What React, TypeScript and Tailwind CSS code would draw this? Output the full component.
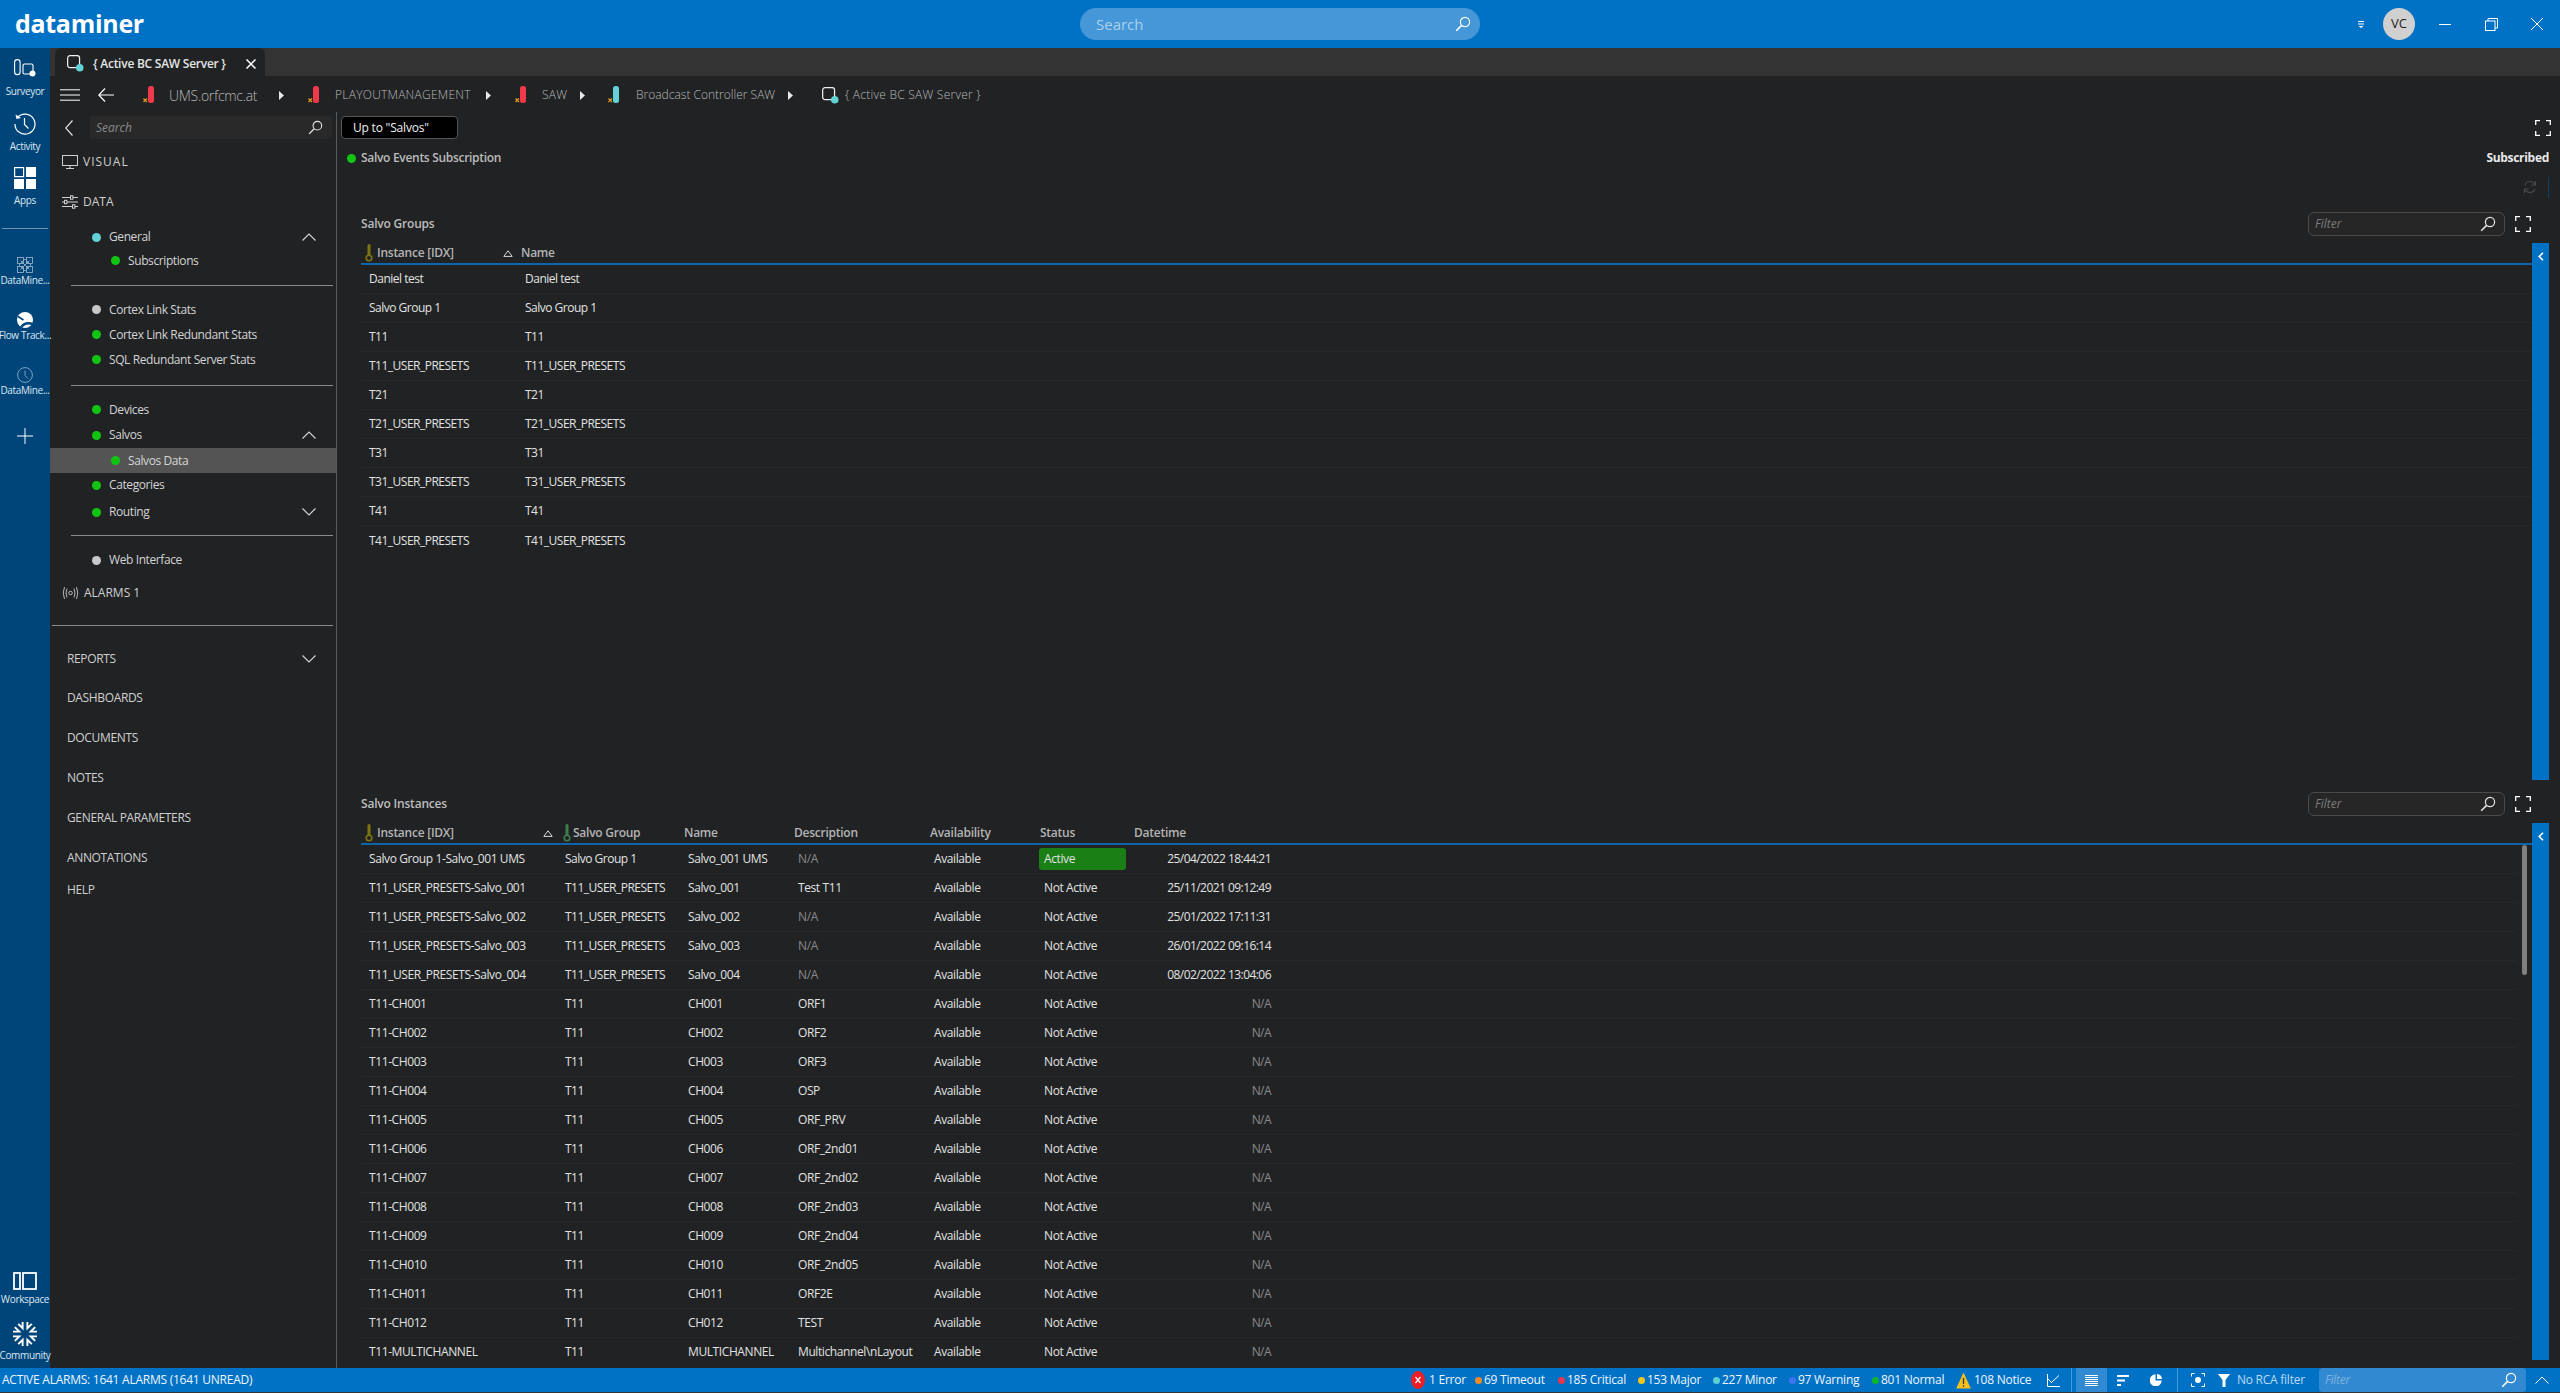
import type { ReactNode } from "react";

const SearchGlass = ({ className = "" }: { className?: string }) => (
  <svg viewBox="0 0 16 16" className={className} fill="none" stroke="currentColor" strokeWidth="1.2">
    <circle cx="10" cy="6" r="4.6" />
    <path d="M6.6 9.4 1.2 14.8" strokeWidth="1.5" />
  </svg>
);

const Chevron = ({ up }: { up?: boolean }) => (
  <svg viewBox="0 0 14 8" className="w-[14px] h-[8px] text-[#d0d0d0]" fill="none" stroke="currentColor" strokeWidth="1.2">
    <path d={up ? "M0.5 7.5 7 1l6.5 6.5" : "M0.5 0.5 7 7l6.5-6.5"} />
  </svg>
);

const Fullscreen = () => (
  <svg viewBox="0 0 16 16" className="w-[16px] h-[16px] text-white" fill="none" stroke="currentColor" strokeWidth="1.3">
    <path d="M0.7 5V0.7H5M11 0.7h4.3V5M15.3 11v4.3H11M5 15.3H0.7V11" />
  </svg>
);

const Dot = ({ c }: { c: string }) => <span className={`block w-[9px] h-[9px] rounded-full shrink-0 ${c}`} />;

const GREEN = "bg-[#12c412]";
const GRAY = "bg-[#c8c8c8]";
const TEAL = "bg-[#62d2d6]";

const Thermo = ({ color }: { color: string }) => (
  <svg viewBox="0 0 8 18" className="w-[8px] h-[18px] shrink-0" fill="none">
    <rect x="2.5" y="0" width="3" height="12" rx="1.5" fill={color} />
    <circle cx="4" cy="14" r="2.8" stroke={color} strokeWidth="1.6" />
  </svg>
);

const SortUp = () => (
  <svg viewBox="0 0 10 7" className="w-[10px] h-[7px] shrink-0 text-[#d8d8d8]" fill="none" stroke="currentColor" strokeWidth="1">
    <path d="M5 0.8 9.2 6.4H0.8Z" />
  </svg>
);

const ElementIcon = ({ color }: { color: string }) => (
  <svg viewBox="0 0 12 18" className="w-[12px] h-[18px] shrink-0" fill="none">
    <rect x="5" y="0" width="6" height="17" rx="2.5" fill={color} />
    <path d="M0.5 12.5 4 16M4 12.5 0.5 16" stroke="#e2971c" strokeWidth="1.3" />
  </svg>
);

const ActiveIcon = ({ className = "" }: { className?: string }) => (
  <svg viewBox="0 0 18 18" className={className} fill="none">
    <rect x="0.7" y="0.7" width="12.6" height="12.6" rx="2.5" stroke="#f0f0f0" strokeWidth="1.3" />
    <circle cx="13.5" cy="13.5" r="4" fill="#62d2d6" />
  </svg>
);

const CrumbArrow = ({ w }: { w: string }) => (
  <span className={`block shrink-0 ${w}`}>
    <svg viewBox="0 0 5 9" className="w-[5px] h-[9px]">
      <path d="M0 0 5 4.5 0 9Z" fill="#e8e8e8" />
    </svg>
  </span>
);

const TopBar = () => (
  <header className="h-[48px] shrink-0 bg-[#0072c6] flex items-center relative">
    <div className="pl-[15px] w-[1080px] text-white font-bold text-[25px] tracking-[-0.3px] leading-none pb-[2px]">dataminer</div>
    <div className="w-[400px] h-[32px] rounded-full bg-[#4597d8] flex items-center pl-[16px] pr-[9px]">
      <span className="text-[15px] text-[#acd0ec]">Search</span>
      <SearchGlass className="ml-auto w-[16px] h-[16px] text-white" />
    </div>
    <div className="ml-auto flex items-center">
      <svg viewBox="0 0 6 7" className="w-[6px] h-[7px] text-white mr-[19px]">
        <path d="M0 0h6v1H0zM0 2.5h6v1H0zM0.5 5h5L3 7Z" fill="currentColor" />
      </svg>
      <div className="w-[32px] h-[32px] rounded-full bg-[#d0d0d0] text-[#222] text-[13px] flex items-center justify-center">VC</div>
      <div className="w-[12px] h-px bg-white ml-[24px]" />
      <svg viewBox="0 0 13 13" className="w-[13px] h-[13px] text-white ml-[34px]" fill="none" stroke="currentColor">
        <rect x="0.5" y="3" width="9.5" height="9.5" />
        <path d="M3 3V0.5h9.5V10H10" />
      </svg>
      <svg viewBox="0 0 12 12" className="w-[12px] h-[12px] text-white ml-[33px] mr-[17px]" fill="none" stroke="currentColor">
        <path d="M0 0l12 12M12 0 0 12" />
      </svg>
    </div>
  </header>
);

const RailLabel = ({ children }: { children: ReactNode }) => (
  <div className="text-[10px] leading-[15px] tracking-[-0.35px] text-[#dbe6ef] whitespace-nowrap">{children}</div>
);

const Rail = () => (
  <aside className="w-[50px] shrink-0 bg-[#00457a] flex flex-col items-center pt-[8px] pb-[5px]">
    <div className="h-[24px] flex items-center">
      <svg viewBox="0 0 22 18" className="w-[22px] h-[18px] text-white" fill="none" stroke="currentColor" strokeWidth="1.1">
        <rect x="0.6" y="0.6" width="5.5" height="15" rx="2.7" />
        <rect x="9" y="5" width="10" height="10" rx="1.5" />
        <circle cx="18.5" cy="14.5" r="3" fill="currentColor" stroke="none" />
      </svg>
    </div>
    <div className="mt-[4px]"><RailLabel>Surveyor</RailLabel></div>

    <div className="h-[24px] mt-[13px] flex items-center">
      <svg viewBox="0 0 22 22" className="w-[22px] h-[22px] text-white" fill="none" stroke="currentColor" strokeWidth="1.2">
        <path d="M3.5 4.5A10 10 0 1 1 1 11" />
        <path d="M1.5 1.5 2.5 6 7 5Z" fill="currentColor" stroke="none" />
        <path d="M10.5 5v6.5l4 4" />
      </svg>
    </div>
    <div className="mt-[3px]"><RailLabel>Activity</RailLabel></div>

    <div className="h-[24px] mt-[12px] flex items-center">
      <svg viewBox="0 0 22 22" className="w-[22px] h-[22px] text-white" fill="currentColor">
        <path d="M0.6 0.6H9.6V9.6H0.6Z" fill="none" stroke="currentColor" strokeWidth="1.2" />
        <rect x="12" y="0" width="10" height="10" />
        <rect x="0" y="12" width="10" height="10" />
        <rect x="12" y="12" width="10" height="10" />
      </svg>
    </div>
    <div className="mt-[3px]"><RailLabel>Apps</RailLabel></div>

    <div className="w-[46px] h-px bg-[#6f94b2] mt-[20px] shrink-0" />

    <div className="h-[16px] mt-[28px] flex items-center">
      <svg viewBox="0 0 16 16" className="w-[16px] h-[16px] text-[#9fb8cc]" fill="none" stroke="currentColor" strokeWidth="0.8">
        <rect x="0.5" y="0.5" width="6" height="6" />
        <rect x="9.5" y="0.5" width="6" height="6" />
        <rect x="0.5" y="9.5" width="6" height="6" />
        <rect x="9.5" y="9.5" width="6" height="6" />
        <path d="M3.5 3.5 12.5 12.5M12.5 3.5 3.5 12.5M8 2 14 8 8 14 2 8Z" />
      </svg>
    </div>
    <RailLabel>DataMine...</RailLabel>

    <div className="h-[16px] mt-[24px] flex items-center">
      <svg viewBox="0 0 16 16" className="w-[16px] h-[16px]">
        <circle cx="8" cy="8" r="8" fill="#fff" />
        <path d="M1 4.5 6.5 8" stroke="#00457a" strokeWidth="1.6" fill="none" />
        <path d="M4 15.5Q7.5 9.5 16 12" stroke="#00457a" strokeWidth="2.4" fill="none" />
      </svg>
    </div>
    <RailLabel>Flow Track...</RailLabel>

    <div className="h-[16px] mt-[24px] flex items-center">
      <svg viewBox="0 0 16 16" className="w-[16px] h-[16px] text-[#8fadc4]" fill="none" stroke="currentColor" strokeWidth="0.9">
        <circle cx="8" cy="8" r="7.4" />
        <path d="M8 3.5V8.5L11 11.5" />
      </svg>
    </div>
    <RailLabel>DataMine...</RailLabel>

    <div className="h-[18px] mt-[29px] flex items-center">
      <svg viewBox="0 0 16 16" className="w-[16px] h-[16px] text-white" stroke="currentColor" strokeWidth="1">
        <path d="M8 0v16M0 8h16" />
      </svg>
    </div>

    <div className="mt-auto h-[20px] flex items-center">
      <svg viewBox="0 0 24 18" className="w-[24px] h-[18px] text-white" fill="none" stroke="currentColor" strokeWidth="1.8">
        <rect x="1" y="1" width="6" height="16" />
        <rect x="10" y="1" width="13" height="16" />
      </svg>
    </div>
    <div className="mt-[1px]"><RailLabel>Workspace</RailLabel></div>
    <div className="mt-[13px] h-[28px] flex items-center">
      <svg viewBox="0 0 26 26" className="w-[26px] h-[26px] text-white" fill="none" stroke="currentColor" strokeWidth="1.9">
        {[0, 45, 90, 135, 180, 225, 270, 315].map((a) => (
          <path key={a} d="M10.6 1 13 6.8 15.4 1" transform={`rotate(${a + 22.5} 13 13)`} />
        ))}
      </svg>
    </div>
    <RailLabel>Community</RailLabel>
  </aside>
);

type NavProps = { dot: string; label: string; h: string; sub?: boolean; chevron?: "up" | "down"; active?: boolean };

const NavRow = ({ dot, label, h, sub, chevron, active }: NavProps) => (
  <div className={`flex items-center gap-[8px] pr-[20px] shrink-0 ${h} ${sub ? "pl-[61px]" : "pl-[42px]"} ${active ? "bg-[#545454]" : ""}`}>
    <Dot c={dot} />
    <span className="text-[12px] text-[#d4d4d4] tracking-[-0.4px] whitespace-nowrap">{label}</span>
    {chevron && <span className="ml-auto"><Chevron up={chevron === "up"} /></span>}
  </div>
);

const NavRule = ({ className }: { className: string }) => (
  <div className={`h-[1px] bg-[#8a8a8a] mr-[3px] shrink-0 ${className}`} />
);

const SectionLink = ({ label, h, chevron }: { label: string; h: string; chevron?: boolean }) => (
  <div className={`flex items-center pl-[17px] pr-[20px] text-[12px] text-[#d0d0d0] tracking-[-0.35px] shrink-0 ${h}`}>
    {label}
    {chevron && <span className="ml-auto"><Chevron /></span>}
  </div>
);

const Sidebar = () => (
  <nav className="w-[287px] shrink-0 border-r border-[#5a5a5a] flex flex-col pt-[4px]">
    <div className="h-[23px] flex items-center shrink-0">
      <svg viewBox="0 0 8 16" className="w-[8px] h-[16px] ml-[15px] text-[#e0e0e0]" fill="none" stroke="currentColor" strokeWidth="1.2">
        <path d="M7.5 0.5 0.7 8l6.8 7.5" />
      </svg>
      <div className="ml-[17px] w-[242px] h-[23px] rounded-[3px] bg-[#292929] flex items-center pl-[6px] pr-[9px]">
        <span className="italic text-[12px] text-[#8a8a8a]">Search</span>
        <SearchGlass className="ml-auto w-[15px] h-[15px] text-[#e4e4e4]" />
      </div>
    </div>

    <div className="h-[28px] mt-[9px] flex items-center pl-[12px] gap-[5px] shrink-0 text-[12px] text-[#d0d0d0]">
      <svg viewBox="0 0 16 14" className="w-[16px] h-[14px]" fill="none" stroke="currentColor" strokeWidth="1">
        <rect x="0.5" y="0.5" width="15" height="10" />
        <path d="M8 10.5v3M4 13.5h8" />
      </svg>
      <span className="tracking-[1px]">VISUAL</span>
    </div>
    <div className="h-[28px] mt-[12px] flex items-center pl-[12px] gap-[5px] shrink-0 text-[12px] text-[#d0d0d0]">
      <svg viewBox="0 0 16 14" className="w-[16px] h-[14px]" fill="none" stroke="currentColor" strokeWidth="1">
        <path d="M0 2.5h16M0 7h16M0 11.5h16" />
        <rect x="8.5" y="0.8" width="2.4" height="3.4" fill="#202224" />
        <rect x="2.5" y="5.3" width="2.4" height="3.4" fill="#202224" />
        <rect x="10.5" y="9.8" width="2.4" height="3.4" fill="#202224" />
      </svg>
      DATA
    </div>

    <div className="mt-[9px]" />
    <NavRow dot={TEAL} label="General" h="h-[24px]" chevron="up" />
    <NavRow dot={GREEN} label="Subscriptions" h="h-[23px]" sub />
    <NavRule className="ml-[21px] mt-[13px]" />
    <div className="mt-[11px]" />
    <NavRow dot={GRAY} label="Cortex Link Stats" h="h-[25px]" />
    <NavRow dot={GREEN} label="Cortex Link Redundant Stats" h="h-[25px]" />
    <NavRow dot={GREEN} label="SQL Redundant Server Stats" h="h-[25px]" />
    <NavRule className="ml-[21px] mt-[13px]" />
    <div className="mt-[11px]" />
    <NavRow dot={GREEN} label="Devices" h="h-[25px]" />
    <NavRow dot={GREEN} label="Salvos" h="h-[26px]" chevron="up" />
    <NavRow dot={GREEN} label="Salvos Data" h="h-[25px]" sub active />
    <NavRow dot={GREEN} label="Categories" h="h-[24px]" />
    <NavRow dot={GREEN} label="Routing" h="h-[30px]" chevron="down" />
    <NavRule className="ml-[21px] mt-[8px]" />
    <div className="mt-[12px]" />
    <NavRow dot={GRAY} label="Web Interface" h="h-[24px]" />

    <div className="h-[24px] mt-[9px] flex items-center pl-[12px] gap-[5px] shrink-0 text-[12px] text-[#d0d0d0]">
      <svg viewBox="0 0 17 12" className="w-[17px] h-[12px] text-[#c8c8c8]" fill="none" stroke="currentColor" strokeWidth="0.9">
        <circle cx="8.5" cy="6" r="1.8" />
        <path d="M5 1.5Q3 6 5 10.5M12 1.5q2 4.5 0 9M2.5 0Q0 6 2.5 12M14.5 0q2.5 6 0 12" />
      </svg>
      ALARMS 1
    </div>
    <NavRule className="ml-[2px] mt-[20px]" />

    <div className="mt-[13px]" />
    <SectionLink label="REPORTS" h="h-[39px]" chevron />
    <SectionLink label="DASHBOARDS" h="h-[40px]" />
    <SectionLink label="DOCUMENTS" h="h-[40px]" />
    <SectionLink label="NOTES" h="h-[40px]" />
    <SectionLink label="GENERAL PARAMETERS" h="h-[40px]" />
    <SectionLink label="ANNOTATIONS" h="h-[40px]" />
    <SectionLink label="HELP" h="h-[24px]" />
  </nav>
);

const Filter = () => (
  <div className="w-[197px] h-[24px] rounded-[6px] border border-[#4a4a4a] bg-[#262626] flex items-center pl-[6px] pr-[8px] ml-auto shrink-0">
    <span className="italic text-[12px] text-[#7c7c7c]">Filter</span>
    <SearchGlass className="ml-auto w-[16px] h-[16px] text-[#e4e4e4]" />
  </div>
);

const BlueStrip = () => (
  <div className="w-[17px] shrink-0 bg-[#0072c6] flex justify-center pt-[9px]">
    <svg viewBox="0 0 6 9" className="w-[6px] h-[9px] text-white" fill="none" stroke="currentColor" strokeWidth="1.6">
      <path d="M5 0.8 1.2 4.5 5 8.2" />
    </svg>
  </div>
);

const Section = ({ title, className, children }: { title: string; className: string; children: ReactNode }) => (
  <section className={`flex flex-col pl-[24px] pr-[11px] min-h-0 ${className}`}>
    <div className="h-[24px] flex items-center shrink-0">
      <span className="text-[12px] font-semibold text-[#bcbcbc] tracking-[-0.2px]">{title}</span>
      <Filter />
      <span className="ml-[10px] mr-[18px] block"><Fullscreen /></span>
    </div>
    <div className="mt-[7px] flex flex-1 min-h-0">
      <div className="relative flex-1 overflow-hidden">{children}</div>
      <BlueStrip />
    </div>
  </section>
);

const HEAD = "h-[22px] border-b-2 border-[#0f63a8] text-[12px] font-semibold text-[#b4b4b4] tracking-[-0.25px] items-center flex";

const groups = [
  "Daniel test",
  "Salvo Group 1",
  "T11",
  "T11_USER_PRESETS",
  "T21",
  "T21_USER_PRESETS",
  "T31",
  "T31_USER_PRESETS",
  "T41",
  "T41_USER_PRESETS",
];

const GroupsTable = () => (
  <div>
    <div className={HEAD}>
      <span className="ml-[4px]"><Thermo color="#7d7412" /></span>
      <span className="ml-[4px] w-[126px]">Instance [IDX]</span>
      <SortUp />
      <span className="ml-[8px]">Name</span>
    </div>
    {groups.map((g, i) => (
      <div key={g} className={`h-[29px] flex items-center pl-[8px] text-[12px] text-[#e2e2e2] tracking-[-0.5px] ${i < groups.length - 1 ? "border-b border-[#26282a]" : ""}`}>
        <span className="w-[156px]">{g}</span>
        <span>{g}</span>
      </div>
    ))}
  </div>
);

type Salvo = { id: string; group: string; name: string; desc: string; status: string; date: string };

const presets = (n: string, desc: string, date: string): Salvo => ({
  id: `T11_USER_PRESETS-Salvo_${n}`,
  group: "T11_USER_PRESETS",
  name: `Salvo_${n}`,
  desc,
  status: "Not Active",
  date,
});

const channel = (name: string, desc: string): Salvo => ({
  id: `T11-${name}`,
  group: "T11",
  name,
  desc,
  status: "Not Active",
  date: "N/A",
});

const salvos: Salvo[] = [
  { id: "Salvo Group 1-Salvo_001 UMS", group: "Salvo Group 1", name: "Salvo_001 UMS", desc: "N/A", status: "Active", date: "25/04/2022 18:44:21" },
  presets("001", "Test T11", "25/11/2021 09:12:49"),
  presets("002", "N/A", "25/01/2022 17:11:31"),
  presets("003", "N/A", "26/01/2022 09:16:14"),
  presets("004", "N/A", "08/02/2022 13:04:06"),
  channel("CH001", "ORF1"),
  channel("CH002", "ORF2"),
  channel("CH003", "ORF3"),
  channel("CH004", "OSP"),
  channel("CH005", "ORF_PRV"),
  channel("CH006", "ORF_2nd01"),
  channel("CH007", "ORF_2nd02"),
  channel("CH008", "ORF_2nd03"),
  channel("CH009", "ORF_2nd04"),
  channel("CH010", "ORF_2nd05"),
  channel("CH011", "ORF2E"),
  channel("CH012", "TEST"),
  channel("MULTICHANNEL", "Multichannel\\nLayout"),
];

const InstancesTable = () => (
  <div>
    <div className={HEAD}>
      <span className="ml-[4px]"><Thermo color="#7d7412" /></span>
      <span className="ml-[4px] w-[166px]">Instance [IDX]</span>
      <SortUp />
      <span className="ml-[10px]"><Thermo color="#3f7f4a" /></span>
      <span className="ml-[2px] w-[111px]">Salvo Group</span>
      <span className="w-[110px]">Name</span>
      <span className="w-[136px]">Description</span>
      <span className="w-[110px]">Availability</span>
      <span className="w-[94px]">Status</span>
      <span>Datetime</span>
    </div>
    {salvos.map((s) => (
      <div key={s.id} className="h-[29px] mr-[16px] flex items-center pl-[8px] text-[12px] text-[#e2e2e2] tracking-[-0.4px] border-b border-[#26282a] whitespace-nowrap">
        <span className="w-[196px]">{s.id}</span>
        <span className="w-[123px] tracking-[-0.5px]">{s.group}</span>
        <span className="w-[110px]">{s.name}</span>
        <span className={`w-[136px] ${s.desc === "N/A" ? "text-[#8a8a8a]" : ""}`}>{s.desc}</span>
        <span className="w-[105px]">Available</span>
        {s.status === "Active" ? (
          <span className="w-[87px] h-[22px] rounded-[3px] bg-[#1a8015] pl-[5px] flex items-center">Active</span>
        ) : (
          <span className="w-[87px] pl-[5px]">{s.status}</span>
        )}
        <span className={`w-[145px] text-right tracking-[-0.55px] ${s.date === "N/A" ? "text-[#8a8a8a]" : ""}`}>{s.date}</span>
      </div>
    ))}
    <div className="absolute top-[22px] right-[5px] w-[5px] h-[130px] rounded-full bg-[#808080]" />
  </div>
);

const Main = () => (
  <main className="flex-1 min-w-0 flex flex-col pt-[4px] pb-[8px]">
    <div className="flex items-center h-[23px] shrink-0 pl-[4px] pr-[9px]">
      <div className="w-[117px] h-[23px] bg-black border border-[#555] rounded-[4px] pl-[11px] flex items-center text-[12px] text-[#f0f0f0] tracking-[-0.2px]">
        Up to "Salvos"
      </div>
      <span className="ml-auto block"><Fullscreen /></span>
    </div>
    <div className="h-[20px] mt-[9px] shrink-0 flex items-center pl-[10px] pr-[11px] gap-[5px]">
      <Dot c={GREEN} />
      <span className="text-[12px] font-semibold text-[#bcbcbc] tracking-[-0.3px]">Salvo Events Subscription</span>
      <span className="ml-auto text-[12px] font-bold text-[#e8e8e8] tracking-[-0.3px]">Subscribed</span>
    </div>
    <div className="h-[22px] mt-[8px] shrink-0 flex items-center justify-end pr-[11px]">
      <svg viewBox="0 0 14 14" className="w-[14px] h-[14px] text-[#4a4a4a]" fill="none" stroke="currentColor" strokeWidth="1.1">
        <path d="M2 5A5.5 5.5 0 0 1 12 4.5M12 9A5.5 5.5 0 0 1 2 9.5" />
        <path d="M12.5 1v4h-4M1.5 13V9h4" />
      </svg>
      <span className="block w-px h-[21px] bg-[#123f63] ml-[11px]" />
    </div>
    <Section title="Salvo Groups" className="mt-[14px] h-[568px] shrink-0">
      <GroupsTable />
    </Section>
    <Section title="Salvo Instances" className="mt-[12px] flex-1">
      <InstancesTable />
    </Section>
  </main>
);

const Breadcrumbs = () => (
  <div className="h-[36px] shrink-0 pt-[2px] flex items-center text-[#b8b8b8] font-light whitespace-nowrap">
    <svg viewBox="0 0 20 12" className="w-[20px] h-[12px] ml-[10px] text-white" stroke="currentColor" strokeWidth="1">
      <path d="M0 0.8h20M0 6h20M0 11.2h20" />
    </svg>
    <svg viewBox="0 0 16 14" className="w-[16px] h-[14px] ml-[18px] text-white" fill="none" stroke="currentColor" strokeWidth="1.2">
      <path d="M7 0.5.8 7 7 13.5M.8 7H16" />
    </svg>
    <span className="ml-[29px] w-[26px] shrink-0"><ElementIcon color="#f0394a" /></span>
    <span className="w-[110px] text-[14px] tracking-[-0.3px]">UMS.orfcmc.at</span>
    <CrumbArrow w="w-[29px]" />
    <span className="w-[27px] shrink-0"><ElementIcon color="#f0394a" /></span>
    <span className="w-[151px] text-[12px] tracking-[0.25px]">PLAYOUTMANAGEMENT</span>
    <CrumbArrow w="w-[29px]" />
    <span className="w-[27px] shrink-0"><ElementIcon color="#f0394a" /></span>
    <span className="w-[38px] text-[12px] tracking-[0.25px]">SAW</span>
    <CrumbArrow w="w-[28px]" />
    <span className="w-[28px] shrink-0"><ElementIcon color="#62d2d6" /></span>
    <span className="w-[152px] text-[12px]">Broadcast Controller SAW</span>
    <CrumbArrow w="w-[34px]" />
    <span className="w-[23px] shrink-0"><ActiveIcon className="w-[17px] h-[17px]" /></span>
    <span className="text-[12px] tracking-[0.25px]">{"{ Active BC SAW Server }"}</span>
  </div>
);

const Content = () => (
  <div className="flex-1 min-w-0 flex flex-col">
    <div className="h-[28px] shrink-0 bg-[#333333] pl-[5px]">
      <div className="w-[210px] h-[28px] bg-[#202224] rounded-t-[6px] flex items-center pl-[12px] pr-[9px] pt-[3px]">
        <ActiveIcon className="w-[17px] h-[17px] shrink-0" />
        <span className="ml-[9px] text-[12px] font-semibold text-[#e4e4e4] tracking-[-0.25px] whitespace-nowrap">{"{ Active BC SAW Server }"}</span>
        <svg viewBox="0 0 10 10" className="ml-auto w-[10px] h-[10px] text-white" fill="none" stroke="currentColor" strokeWidth="1.5">
          <path d="M0.5 0.5l9 9M9.5 0.5l-9 9" />
        </svg>
      </div>
    </div>
    <Breadcrumbs />
    <div className="flex-1 min-h-0 flex">
      <Sidebar />
      <Main />
    </div>
  </div>
);

const alarms = [
  { w: "w-[83px]", dot: "bg-[#f08a24]", label: "69 Timeout" },
  { w: "w-[80px]", dot: "bg-[#e8364f]", label: "185 Critical" },
  { w: "w-[75px]", dot: "bg-[#f2c81e]", label: "153 Major" },
  { w: "w-[76px]", dot: "bg-[#5cd0d2]", label: "227 Minor" },
  { w: "w-[83px]", dot: "bg-[#3f74f0]", label: "97 Warning" },
  { w: "w-[84px]", dot: "bg-[#12b52a]", label: "801 Normal" },
];

const StatusBar = () => (
  <footer className="h-[25px] shrink-0 bg-[#0072c6] border-b border-[#333] flex items-stretch text-[12px] text-[#eef5fb] tracking-[-0.25px] whitespace-nowrap">
    <div className="pl-[2px] flex items-center w-[1411px] shrink-0">ACTIVE ALARMS: 1641 ALARMS (1641 UNREAD)</div>
    <div className="flex items-center w-[64px] shrink-0 gap-[4px]">
      <svg viewBox="0 0 14 18" className="w-[14px] h-[18px] shrink-0">
        <ellipse cx="7" cy="9" rx="7" ry="9" fill="#ee1c25" />
        <path d="M4.5 6 9.5 12M9.5 6 4.5 12" stroke="#fff" strokeWidth="1.2" />
      </svg>
      1 Error
    </div>
    {alarms.map((a) => (
      <div key={a.label} className={`flex items-center shrink-0 gap-[2px] ${a.w}`}>
        <span className={`block w-[7px] h-[7px] rounded-full shrink-0 ${a.dot}`} />
        {a.label}
      </div>
    ))}
    <div className="flex items-center w-[91px] shrink-0 gap-[3px]">
      <svg viewBox="0 0 15 17" className="w-[15px] h-[17px] shrink-0">
        <path d="M7.5 0.5 14.8 16.5H0.2Z" fill="#f6c01c" />
        <path d="M7.5 6v6M7.5 13.2v1.6" stroke="#333" strokeWidth="1.3" />
      </svg>
      108 Notice
    </div>
    <div className="w-[24px] flex items-center shrink-0">
      <svg viewBox="0 0 13 13" className="w-[13px] h-[13px] text-white" fill="none" stroke="currentColor">
        <path d="M0.5 0v12.5H13M1 5l3.5 3.5L12 1.5" />
      </svg>
    </div>
    <div className="w-px bg-[#4a9ad8] shrink-0" />
    <div className="w-[4px] shrink-0" />
    <div className="w-[31px] bg-[#3189d1] flex items-center justify-center shrink-0">
      <svg viewBox="0 0 13 11" className="w-[13px] h-[11px] text-white" stroke="currentColor" strokeWidth="1">
        <path d="M0 0.5h13M0 2.5h13M0 4.5h13M0 6.5h13M0 8.5h13M0 10.5h13" />
      </svg>
    </div>
    <div className="w-[32px] flex items-center justify-center shrink-0">
      <svg viewBox="0 0 12 11" className="w-[12px] h-[11px]" fill="#fff">
        <rect x="0" y="0" width="12" height="2" />
        <rect x="0" y="4.5" width="8" height="2" />
        <rect x="0" y="9" width="4" height="2" />
      </svg>
    </div>
    <div className="w-[33px] flex items-center justify-center shrink-0">
      <svg viewBox="0 0 12 12" className="w-[12px] h-[12px]" fill="#fff">
        <path d="M5.5 0.3V6.5h6.2A6 6 0 1 1 5.5 0.3Z" />
        <path d="M7 0a5.5 5.5 0 0 1 5 5H7Z" />
      </svg>
    </div>
    <div className="w-[5px] shrink-0" />
    <div className="w-px bg-[#4a9ad8] shrink-0" />
    <div className="w-[13px] shrink-0" />
    <div className="flex items-center shrink-0 w-[22px]">
      <svg viewBox="0 0 14 14" className="w-[14px] h-[14px] text-white" fill="none" stroke="currentColor">
        <path d="M3.5 0.5h-3v3M10.5 0.5h3v3M13.5 10.5v3h-3M3.5 13.5h-3v-3" />
        <circle cx="7" cy="7" r="3" fill="currentColor" stroke="none" />
      </svg>
    </div>
    <div className="flex items-center shrink-0 w-[19px] ml-[5px]">
      <svg viewBox="0 0 12 13" className="w-[12px] h-[13px]" fill="#fff">
        <path d="M0 0h12L7.5 6v7h-3V6Z" />
      </svg>
    </div>
    <div className="flex items-center w-[82px] shrink-0 text-[#bcd9ef]">No RCA filter</div>
    <div className="w-[207px] bg-[#3189d1] rounded-[4px] flex items-center pl-[6px] pr-[9px] shrink-0">
      <span className="italic text-[#7fb3dc]">Filter</span>
      <SearchGlass className="ml-auto w-[16px] h-[16px] text-white" />
    </div>
    <div className="flex items-center pl-[9px]">
      <svg viewBox="0 0 14 8" className="w-[14px] h-[8px] text-white" fill="none" stroke="currentColor">
        <path d="M0.5 7.5 7 1l6.5 6.5" />
      </svg>
    </div>
  </footer>
);

export default function App() {
  return (
    <div className="w-[2560px] h-[1393px] overflow-hidden flex flex-col bg-[#202224] text-white font-['Open_Sans','Noto_Sans',sans-serif]">
      <TopBar />
      <div className="flex-1 min-h-0 flex">
        <Rail />
        <Content />
      </div>
      <StatusBar />
    </div>
  );
}
